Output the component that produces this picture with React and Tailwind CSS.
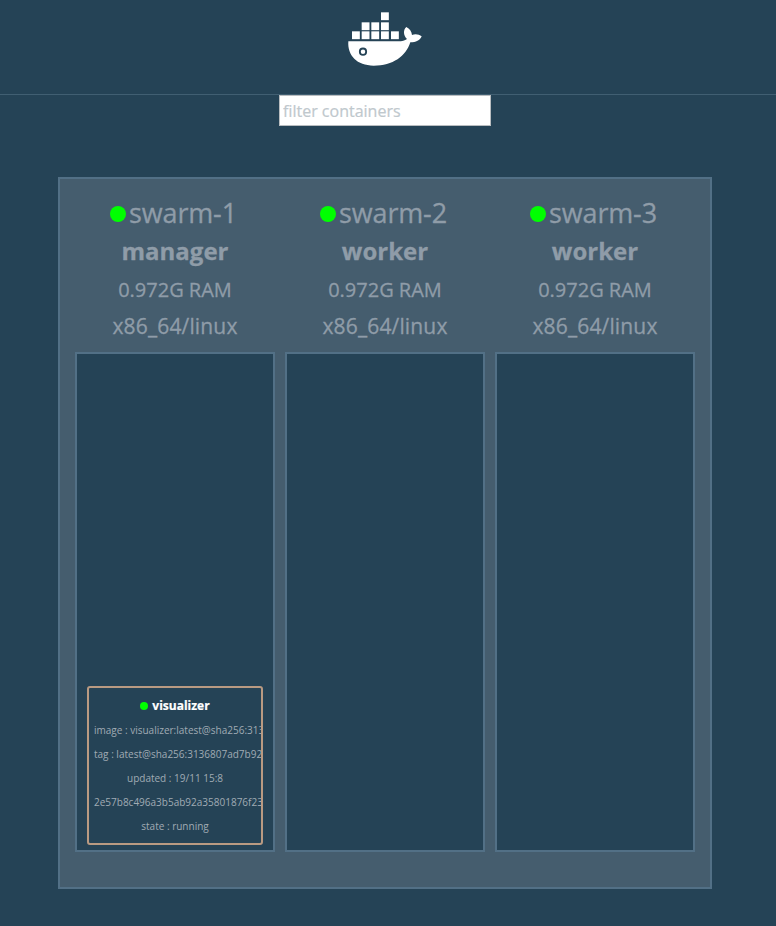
const nodes = [
  {
    name: 'swarm-1',
    role: 'manager',
    tasks: [
      {
        name: 'visualizer',
        lines: [
          'image : visualizer:latest@sha256:3136807ad7b92',
          'tag : latest@sha256:3136807ad7b9228a45b',
          'updated : 19/11 15:8',
          '2e57b8c496a3b5ab92a35801876f23a1c04e',
          'state : running',
        ],
      },
    ],
  },
  { name: 'swarm-2', role: 'worker', tasks: [] },
  { name: 'swarm-3', role: 'worker', tasks: [] },
];

function Whale() {
  const crates = [
    [138, 37],
    [80, 67], [109, 67], [138, 67],
    [51, 94], [80, 94], [109, 94], [138, 94], [168, 94],
  ];
  return (
    <svg className="h-[75px] w-[100px]" viewBox="0 0 300 225" fill="#fff">
      {crates.map(([x, y]) => (
        <rect key={`${x}-${y}`} x={x} y={y} width="23.5" height="23.5" />
      ))}
      <path d="M40 124H190C201 124 210 122 216 117C206 108 203 91 214 81C224 86 230 94 231 105C241 101 252 103 260 109C255 121 243 127 226 127C213 169 174 197 116 197C66 197 37 167 40 124Z" />
      <circle cx="84" cy="155" r="9.5" fill="#fff" stroke="#254356" strokeWidth="5.5" />
    </svg>
  );
}

function Task({ task }) {
  return (
    <div className="mx-[10px] mb-[5px] h-[159px] overflow-hidden rounded-[3px] border-2 border-[#b99a82] px-[5px] pt-[6px] text-[10px] leading-[24px] text-[#a0abb4]">
      <div className="flex items-center justify-center gap-1 text-[12px] font-bold text-white [-webkit-text-stroke:0.2px]">
        <span className="size-2 rounded-full bg-[#00ff00]" />
        <span>{task.name}</span>
      </div>
      {task.lines.map((line) => (
        <div key={line} className="text-center whitespace-nowrap">{line}</div>
      ))}
    </div>
  );
}

function Node({ node }) {
  return (
    <div className="w-[200px] text-center text-[#8f9ca8] [-webkit-text-stroke:0.3px]">
      <div className="flex h-[36px] items-center justify-center gap-[3px] pr-[3px] text-[27px] leading-[36px] tracking-[-0.15px]">
        <span className="size-4 rounded-full bg-[#00ff00]" />
        <span className="-mt-[3px]">{node.name}</span>
      </div>
      <div className="-mt-px h-[39px] text-[24px] leading-[39px] font-bold">{node.role}</div>
      <div className="mt-px h-[37px] text-[20px] leading-[37px]">0.972G RAM</div>
      <div className="h-[37px] text-[21px] leading-[36px] tracking-[0.15px]">x86_64/linux</div>
      <div className="mt-[7px] flex h-[500px] flex-col justify-end border-2 border-[#527086] bg-[#254356] [-webkit-text-stroke:0px]">
        {node.tasks.map((task) => (
          <Task key={task.name} task={task} />
        ))}
      </div>
    </div>
  );
}

export default function App() {
  return (
    <div className="flex h-[926px] w-[776px] flex-col overflow-hidden bg-[#254356] font-['Open_Sans',sans-serif]">
      <header className="flex h-[95px] shrink-0 justify-center border-b border-[#415f72] pr-[6px]">
        <Whale />
      </header>
      <input
        type="text"
        placeholder="filter containers"
        className="ml-[279px] h-[31px] w-[212px] rounded-none border border-[#b9bdc0] bg-white px-[3px] text-[16px] [-webkit-text-stroke:0.2px] placeholder:text-[#c0c8cd] placeholder:opacity-100"
      />
      <main className="mt-[51px] ml-[58px] flex h-[712px] w-[654px] gap-[10px] border-2 border-[#527086] bg-[#455d6e] px-[15px] pt-[17px]">
        {nodes.map((node) => (
          <Node key={node.name} node={node} />
        ))}
      </main>
    </div>
  );
}
